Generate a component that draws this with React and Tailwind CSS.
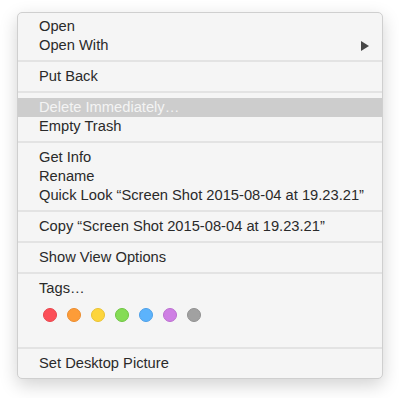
import React from "react";

const tagColors = [
	"bg-[#fc4f58] border-[#e8444c]",
	"bg-[#fd9c38] border-[#eb8c2e]",
	"bg-[#fdd53c] border-[#eac232]",
	"bg-[#85dc55] border-[#6fc543]",
	"bg-[#5cb3fc] border-[#4ea0e8]",
	"bg-[#cf7fe4] border-[#bb6ed0]",
	"bg-[#a1a1a1] border-[#919191]",
];

const Item = ({ children, arrow, highlight }) => (
	<div
		className={
			"flex items-center h-[19px] pl-[21px] pr-[13px] " +
			(highlight ? "bg-[#cdcdcd] text-[#f4f4f4]" : "text-[#2a2a2a]")
		}
	>
		<span className="flex-1 whitespace-nowrap">{children}</span>
		{arrow && (
			<svg width="8" height="10" viewBox="0 0 8 10">
				<path d="M0 0 L8 5 L0 10 Z" fill="#474747" />
			</svg>
		)}
	</div>
);

const Separator = () => (
	<div className="py-[5px]">
		<div className="h-[2px] bg-[#e3e3e3]" />
	</div>
);

const App = () => {
	return (
		<div className="w-[399px] h-[398px] bg-white pt-[12px] pl-[17px]">
			<div
				className="w-[366px] rounded-[5px] border border-[#cfcfcf] bg-[#f5f5f5] pt-[4px] pb-[5px] text-[14.7px] leading-[19px] shadow-[0_6px_18px_rgba(0,0,0,0.18)]"
				style={{ fontFamily: '"Liberation Sans", Arial, sans-serif' }}
			>
				<Item>Open</Item>
				<Item arrow>Open With</Item>
				<Separator />
				<Item>Put Back</Item>
				<Separator />
				<Item highlight>Delete Immediately…</Item>
				<Item>Empty Trash</Item>
				<Separator />
				<Item>Get Info</Item>
				<Item>Rename</Item>
				<Item>Quick Look “Screen Shot 2015-08-04 at 19.23.21”</Item>
				<Separator />
				<Item>Copy “Screen Shot 2015-08-04 at 19.23.21”</Item>
				<Separator />
				<Item>Show View Options</Item>
				<Separator />
				<Item>Tags…</Item>
				<div className="flex gap-[10px] pl-[25px] pt-[10px] pb-[20px]">
					{tagColors.map((c, i) => (
						<div key={i} className={"w-[14px] h-[14px] rounded-full border " + c} />
					))}
				</div>
				<Separator />
				<Item>Set Desktop Picture</Item>
			</div>
		</div>
	);
};

export default App;
